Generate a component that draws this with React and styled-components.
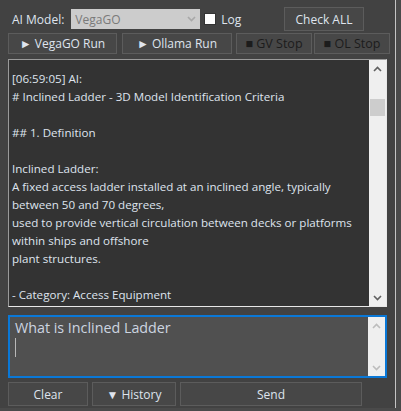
import React from "react";
import styled, { createGlobalStyle } from "styled-components";

const Global = createGlobalStyle`
  html, body {
    margin: 0;
    padding: 0;
    background: #4a4a4a;
  }
  body {
    font-family: "Open Sans", "Noto Sans", sans-serif;
  }
`;

const Panel = styled.div`
  width: 396px;
  height: 408px;
  box-sizing: border-box;
  background: #424242;
  border-right: 1px solid #c4c4c4;
  padding: 7px 0 0 8px;
  display: flex;
  flex-direction: column;
`;

const Row = styled.div`
  display: flex;
  align-items: center;
  margin-top: ${(p) => p.$top || 0}px;
  height: ${(p) => p.$h}px;
`;

const Label = styled.span`
  font-size: 12px;
  color: #dfe4ee;
  margin-left: ${(p) => p.$ml || 0}px;
  margin-right: ${(p) => p.$mr || 0}px;
  white-space: nowrap;
`;

const Combo = styled.div`
  width: 129px;
  height: 20px;
  box-sizing: border-box;
  background: #cccccc;
  color: #7a7a7a;
  font-size: 12px;
  display: flex;
  align-items: center;
  justify-content: space-between;
  padding: 0 4px 0 4px;
  margin-right: 4px;
`;

const Check = styled.span`
  width: 12px;
  height: 12px;
  box-sizing: border-box;
  background: #ffffff;
  border: 1px solid #333;
  margin-right: 5px;
`;

const Button = styled.div`
  width: ${(p) => p.$w}px;
  height: 100%;
  box-sizing: border-box;
  background: #474747;
  border: 1px solid #5c5c5c;
  color: ${(p) => (p.$disabled ? "#1c1c1c" : "#dfe4ee")};
  font-size: ${(p) => (p.$disabled ? 12.5 : 12)}px;
  display: flex;
  align-items: center;
  justify-content: center;
  white-space: nowrap;
  margin-left: ${(p) => p.$ml || 0}px;
  margin-right: ${(p) => p.$mr || 0}px;
`;

const Spacer = styled.div`
  flex: 1;
`;

const LogBox = styled.div`
  margin-top: 5px;
  width: 379px;
  height: 248px;
  box-sizing: border-box;
  background: #333333;
  border-top: 1px solid #9a9a9a;
  border-left: 1px solid #9a9a9a;
  border-bottom: 1px solid #e8e8e8;
  border-right: 1px solid #e8e8e8;
  display: flex;
`;

const LogText = styled.div`
  flex: 1;
  overflow: hidden;
  padding: 10px 3px 0 3px;
  font-size: 11.6px;
  line-height: 18px;
  color: #dfe4ee;
  white-space: pre;
`;

const ScrollBar = styled.div`
  width: 17px;
  background: #efefef;
  display: flex;
  flex-direction: column;
  align-items: center;
`;

const Arrow = styled.div`
  height: 17px;
  width: 17px;
  display: flex;
  align-items: center;
  justify-content: center;
`;

const Track = styled.div`
  flex: 1;
  width: 100%;
  display: flex;
  flex-direction: column;
`;

const Thumb = styled.div`
  margin-top: ${(p) => p.$top}px;
  height: ${(p) => p.$h}px;
  margin-left: 1px;
  margin-right: 1px;
  background: #cdcdcd;
`;

const InputBox = styled.div`
  margin-top: 8px;
  width: 379px;
  height: 63px;
  box-sizing: border-box;
  background: #505050;
  border: 2px solid #0a78d7;
  display: flex;
`;

const InputText = styled.div`
  flex: 1;
  padding: 1px 4px 0 5px;
  font-size: 14.3px;
  line-height: 20px;
  color: #cdd5e0;
  display: flex;
  flex-direction: column;
`;

const Caret = styled.span`
  width: 1px;
  height: 19px;
  background: #b8b8b8;
`;

const Chevron = ({ up, color }) => (
  <svg width="9" height="6" viewBox="0 0 9 6">
    <path
      d={up ? "M1 5 L4.5 1.5 L8 5" : "M1 1 L4.5 4.5 L8 1"}
      fill="none"
      stroke={color}
      strokeWidth="1.6"
    />
  </svg>
);

const logLines = [
  "[06:59:05] AI:",
  "# Inclined Ladder - 3D Model Identification Criteria",
  "",
  "## 1. Definition",
  "",
  "Inclined Ladder:",
  "A fixed access ladder installed at an inclined angle, typically",
  "between 50 and 70 degrees,",
  "used to provide vertical circulation between decks or platforms",
  "within ships and offshore",
  "plant structures.",
  "",
  "- Category: Access Equipment",
];

export default function App() {
  return (
    <>
      <Global />
      <Panel>
        <Row $h={24}>
          <Label $ml={4} $mr={7}>AI Model:</Label>
          <Combo>
            <span>VegaGO</span>
            <Chevron color="#a8a8a8" />
          </Combo>
          <Check />
          <Label>Log</Label>
          <Spacer />
          <Button $w={80} $mr={31}>Check ALL</Button>
        </Row>
        <Row $h={21} $top={2}>
          <Button $w={109}>► VegaGO Run</Button>
          <Button $w={110} $ml={5}>► Ollama Run</Button>
          <Button $w={76} $ml={4} $disabled>■ GV Stop</Button>
          <Button $w={76} $ml={2} $disabled>■ OL Stop</Button>
        </Row>
        <LogBox>
          <LogText>{logLines.join("\n")}</LogText>
          <ScrollBar>
            <Arrow><Chevron up color="#606060" /></Arrow>
            <Track>
              <Thumb $top={22} $h={17} />
            </Track>
            <Arrow><Chevron color="#606060" /></Arrow>
          </ScrollBar>
        </LogBox>
        <InputBox>
          <InputText>
            <span>What is Inclined Ladder</span>
            <Caret />
          </InputText>
          <ScrollBar>
            <Arrow><Chevron up color="#bdbdbd" /></Arrow>
            <Track />
            <Arrow><Chevron color="#bdbdbd" /></Arrow>
          </ScrollBar>
        </InputBox>
        <Row $h={24} $top={4}>
          <Button $w={80}>Clear</Button>
          <Button $w={84} $ml={4}>▼ History</Button>
          <Button $w={182} $ml={4}>Send</Button>
        </Row>
      </Panel>
    </>
  );
}
